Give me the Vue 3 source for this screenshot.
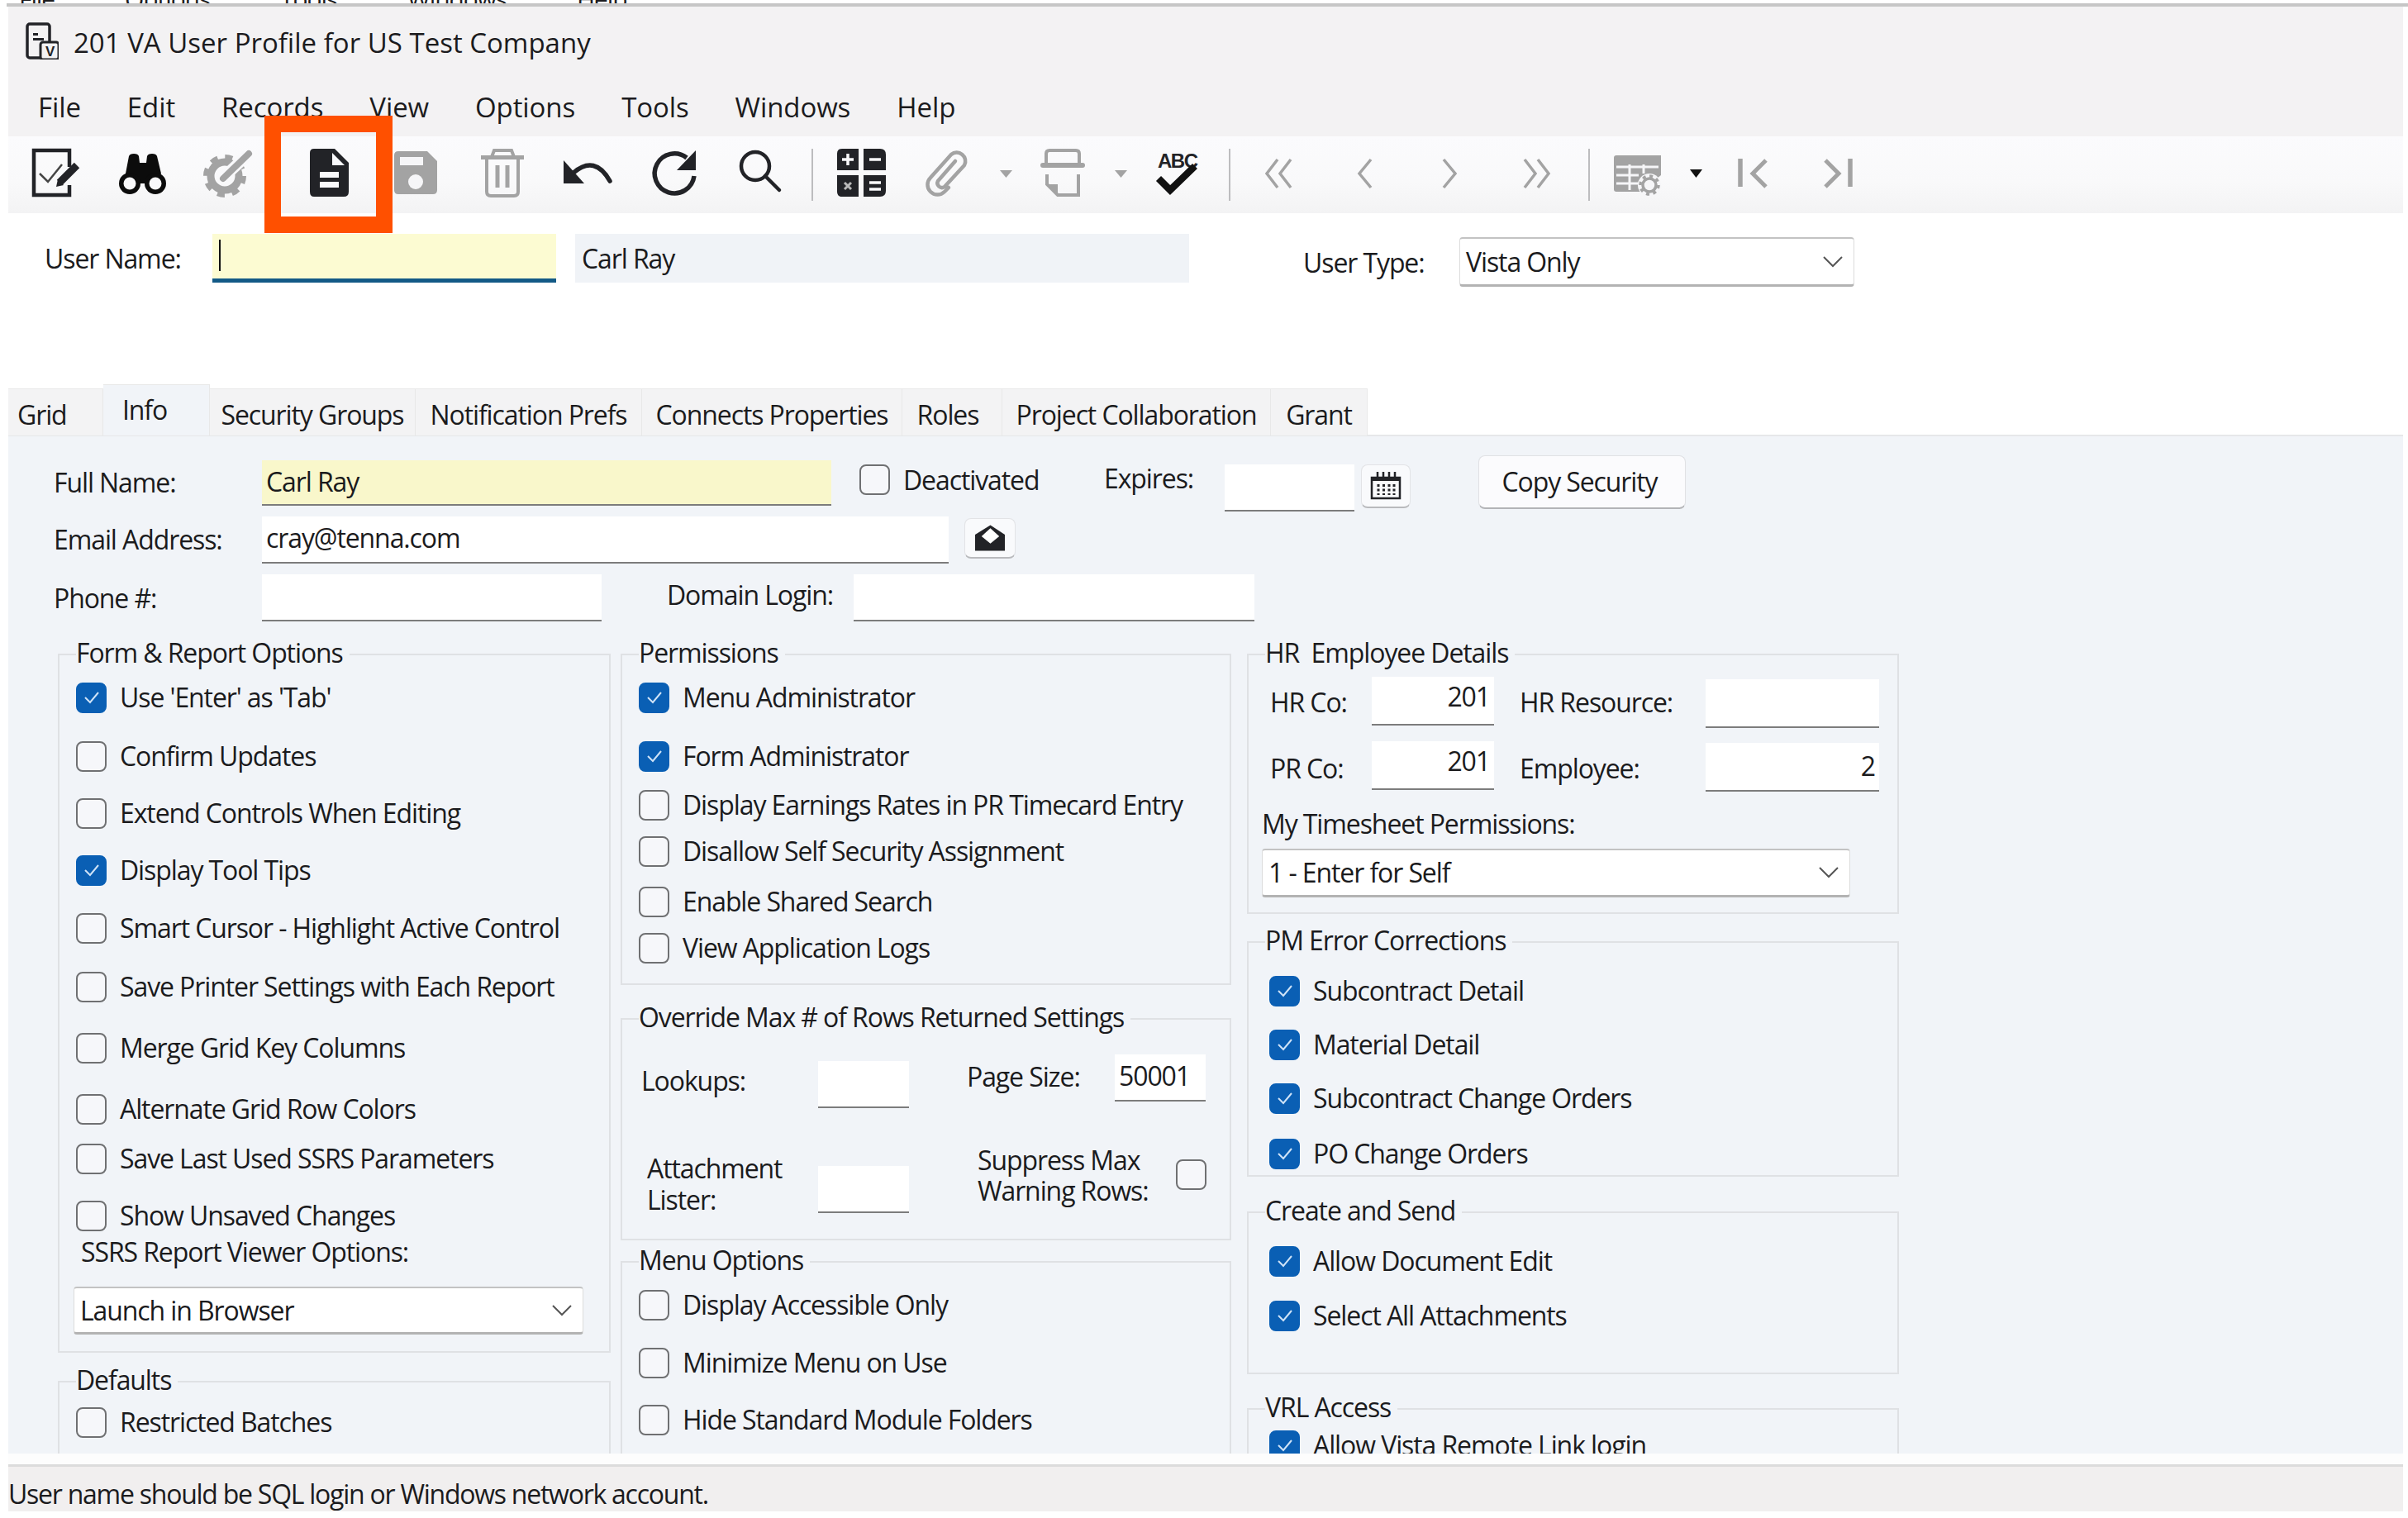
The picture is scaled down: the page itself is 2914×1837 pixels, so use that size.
<script setup>
const tabs = ['Grid', 'Info', 'Security Groups', 'Notification Prefs', 'Connects Properties', 'Roles', 'Project Collaboration', 'Grant']
const menus = ['File', 'Edit', 'Records', 'View', 'Options', 'Tools', 'Windows', 'Help']
const behind = ['File', 'Options', 'Tools', 'Windows', 'Help']

const formOptions = [
  { text: "Use 'Enter' as 'Tab'", on: true, gap: 12 },
  { text: 'Confirm Updates', gap: 27 },
  { text: 'Extend Controls When Editing', gap: 25 },
  { text: 'Display Tool Tips', on: true, gap: 25 },
  { text: 'Smart Cursor - Highlight Active Control', gap: 26 },
  { text: 'Save Printer Settings with Each Report', gap: 27 },
  { text: 'Merge Grid Key Columns', gap: 30 },
  { text: 'Alternate Grid Row Colors', gap: 30 },
  { text: 'Save Last Used SSRS Parameters', gap: 16 },
  { text: 'Show Unsaved Changes', gap: 25 }
]
const permissions = [
  { text: 'Menu Administrator', on: true, gap: 12 },
  { text: 'Form Administrator', on: true, gap: 27 },
  { text: 'Display Earnings Rates in PR Timecard Entry', gap: 15 },
  { text: 'Disallow Self Security Assignment', gap: 12 },
  { text: 'Enable Shared Search', gap: 17 },
  { text: 'View Application Logs', gap: 12 }
]
const menuOptions = [
  { text: 'Display Accessible Only', gap: 12 },
  { text: 'Minimize Menu on Use', gap: 26 },
  { text: 'Hide Standard Module Folders', gap: 25 }
]
const pmErrors = [
  { text: 'Subcontract Detail', on: true, gap: 19 },
  { text: 'Material Detail', on: true, gap: 21 },
  { text: 'Subcontract Change Orders', on: true, gap: 21 },
  { text: 'PO Change Orders', on: true, gap: 23 }
]
const createSend = [
  { text: 'Allow Document Edit', on: true, gap: 19 },
  { text: 'Select All Attachments', on: true, gap: 22 }
]
</script>

<template>
  <div class="app">
    <div class="behind">
      <span v-for="m in behind" :key="m">{{ m }}</span>
    </div>
    <div class="topline"></div>

    <div class="titlebar">
      <svg class="title-icon" viewBox="0 0 40 45">
        <rect x="2" y="2" width="27" height="41" rx="3" fill="none" stroke="#222327" stroke-width="3.5" />
        <rect x="9" y="13" width="6" height="3" fill="#222327" />
        <rect x="9" y="19" width="13" height="3" fill="#222327" />
        <rect x="18" y="24" width="22" height="21" rx="3" fill="#f3f2f3" stroke="#222327" stroke-width="3" />
        <text x="29" y="41" text-anchor="middle" class="title-v">V</text>
      </svg>
      <span class="title-text">201 VA User Profile for US Test Company</span>
    </div>

    <div class="menubar">
      <span v-for="m in menus" :key="m" class="menu-item">{{ m }}</span>
    </div>

    <div class="toolbar">
      <svg class="tb edit" viewBox="0 0 48 60">
        <path d="M46 22V2H3V56H46V44" fill="none" stroke="#222327" stroke-width="4.5" />
        <path d="M10 30L20 40L37 19" fill="none" stroke="#444" stroke-width="2.5" />
        <path d="M34 41L55 20" stroke="#222327" stroke-width="9" />
        <path d="M30 46L32 37L39 44Z" fill="#222327" />
      </svg>
      <svg class="tb find" viewBox="0 0 60 60">
        <path d="M9 30L13 9Q14 6 19 6Q24 6 25 9L26 17H34L35 9Q36 6 41 6Q46 6 47 9L52 30L44 42H16Z" fill="#0c0c0c" />
        <circle cx="14" cy="42" r="13" fill="#0c0c0c" />
        <circle cx="45" cy="42" r="13" fill="#0c0c0c" />
        <circle cx="14" cy="42" r="7.5" fill="#f9f9fb" />
        <circle cx="45" cy="42" r="7.5" fill="#f9f9fb" />
      </svg>
      <svg class="tb gear" viewBox="0 0 58 60">
        <circle cx="24" cy="33" r="17" fill="none" stroke="#a3a3a3" stroke-width="9" />
        <circle cx="24" cy="33" r="23" fill="none" stroke="#a3a3a3" stroke-width="6" stroke-dasharray="9 9" />
        <path d="M20 37L52 7" stroke="#f9f9fb" stroke-width="14" />
        <path d="M22 36L53 6" stroke="#a3a3a3" stroke-width="8" stroke-linecap="round" />
      </svg>
      <svg class="tb newdoc" viewBox="0 0 48 60">
        <path d="M5 0H30L47 17V52Q47 58 41 58H5Q0 58 0 52V5Q0 0 5 0Z" fill="#222327" />
        <path d="M27 5L42 20H27Z" fill="#f9f9fb" />
        <rect x="12" y="28" width="23" height="7" fill="#f9f9fb" />
        <rect x="12" y="40" width="23" height="7" fill="#f9f9fb" />
      </svg>
      <svg class="tb save" viewBox="0 0 52 60">
        <path d="M5 3H40L52 15V50Q52 55 47 55H5Q0 55 0 50V8Q0 3 5 3Z" fill="#a3a3a3" />
        <rect x="7" y="10" width="28" height="10" fill="#f6f6f8" />
        <circle cx="26" cy="40" r="9" fill="#f6f6f8" />
      </svg>
      <svg class="tb trash" viewBox="0 0 52 60" fill="none" stroke="#a3a3a3">
        <path d="M13 10L16 2H37L40 10" stroke-width="4" />
        <path d="M0 10.500H52" stroke-width="5" />
        <path d="M7 11V52Q7 57 12 57H40Q45 57 45 52V11" stroke-width="4" />
        <path d="M20 20V47M32 20V47" stroke-width="5" />
      </svg>
      <svg class="tb undo" viewBox="0 0 58 60">
        <path d="M0 14L25 42H0Z" fill="#222327" />
        <path d="M12 29Q38 7 56 39" fill="none" stroke="#222327" stroke-width="5.500" stroke-linecap="round" />
      </svg>
      <svg class="tb redo" viewBox="0 0 52 60">
        <path d="M41 11A24 24 0 1 0 50 33" fill="none" stroke="#222327" stroke-width="5.500" />
        <path d="M52 2V26H29Z" fill="#222327" />
      </svg>
      <svg class="tb search" viewBox="0 0 50 60" fill="none" stroke="#222327">
        <circle cx="19" cy="21" r="17" stroke-width="4.500" />
        <path d="M31 33L48 50" stroke-width="4.500" stroke-linecap="round" />
      </svg>
      <span class="tb-sep sep-1"></span>
      <svg class="tb calc" viewBox="0 0 60 60">
        <path d="M6 0H26V26H0V6Q0 0 6 0ZM32 0H52Q59 0 59 7V26H32ZM0 32H26V58H6Q0 58 0 52ZM32 32H59V51Q59 58 52 58H32Z" fill="#222327" />
        <path d="M13 6V20M6 13H20M39 13H53M39 41H53M39 49H53" stroke="#f9f9fb" stroke-width="3.500" />
        <path d="M9 41L17 49M17 41L9 49" stroke="#b9b9b9" stroke-width="3" />
      </svg>
      <svg class="tb clip" viewBox="0 0 54 60">
        <path d="M36 15L15 39A5.500 5.500 0 0 0 23 46L47 20A10.500 10.500 0 0 0 31 7L6 35A12 12 0 0 0 23 52L28 47" fill="none" stroke="#a3a3a3" stroke-width="4.500" stroke-linecap="round" />
      </svg>
      <svg class="tb small arr-1" viewBox="0 0 16 60"><path d="M0 26H15L7.500 35Z" fill="#a3a3a3" /></svg>
      <svg class="tb print" viewBox="0 0 52 60" fill="none" stroke="#a3a3a3">
        <path d="M6 19V6Q6 2 10 2H42Q46 2 46 6V19" stroke-width="4" />
        <path d="M2 20H50" stroke-width="6" stroke-linecap="round" />
        <path d="M7 31V43L20 56H45V31" stroke-width="4" />
        <path d="M7 43H20V56Z" fill="#a3a3a3" stroke="none" />
      </svg>
      <svg class="tb small arr-2" viewBox="0 0 16 60"><path d="M0 26H15L7.500 35Z" fill="#a3a3a3" /></svg>
      <svg class="tb spell" viewBox="0 0 52 60">
        <text x="3" y="23" class="abc">ABC</text>
        <path d="M4 36L18 50L48 21" fill="none" stroke="#111" stroke-width="8.500" />
      </svg>
      <span class="tb-sep sep-2"></span>
      <svg class="tb first" viewBox="0 0 38 60" fill="none" stroke="#a3a3a3" stroke-width="3.500">
        <path d="M17 13L4 30L17 47M33 13L20 30L33 47" />
      </svg>
      <svg class="tb prev" viewBox="0 0 22 60" fill="none" stroke="#a3a3a3" stroke-width="3.500">
        <path d="M19 13L5 30L19 47" />
      </svg>
      <svg class="tb next" viewBox="0 0 22 60" fill="none" stroke="#a3a3a3" stroke-width="3.500">
        <path d="M3 13L17 30L3 47" />
      </svg>
      <svg class="tb last" viewBox="0 0 38 60" fill="none" stroke="#a3a3a3" stroke-width="3.500">
        <path d="M5 13L18 30L5 47M21 13L34 30L21 47" />
      </svg>
      <span class="tb-sep sep-3"></span>
      <svg class="tb grid-ic" viewBox="0 0 58 60">
        <path d="M3 8H57V32L32 52H3Q0 52 0 49V11Q0 8 3 8Z" fill="#a3a3a3" />
        <path d="M3 22H54M3 32H30M3 42H30M19 19V50M36 19V30" stroke="#f6f6f8" stroke-width="3" />
        <circle cx="43" cy="44" r="14" fill="#f6f6f8" />
        <circle cx="43" cy="44" r="8" fill="none" stroke="#a3a3a3" stroke-width="3.500" />
        <circle cx="43" cy="44" r="11" fill="none" stroke="#a3a3a3" stroke-width="3.500" stroke-dasharray="4 4.600" />
      </svg>
      <svg class="tb small arr-3" viewBox="0 0 16 60"><path d="M0 25H15L7.500 35Z" fill="#111" /></svg>
      <svg class="tb goto-first" viewBox="0 0 36 60" fill="none" stroke="#a3a3a3" stroke-width="5">
        <path d="M3 12V46" stroke-width="5.500" />
        <path d="M34 14L18 30L34 46" />
      </svg>
      <svg class="tb goto-last" viewBox="0 0 36 60" fill="none" stroke="#a3a3a3" stroke-width="5">
        <path d="M32 12V46" stroke-width="5.500" />
        <path d="M2 14L18 30L2 46" />
      </svg>
    </div>

    <div class="main">
      <div class="user-row">
        <span class="user-label">User Name:</span>
        <div class="user-input"><span class="caret"></span></div>
        <div class="user-display">Carl Ray</div>
        <span class="type-label">User Type:</span>
        <div class="dropdown type-select">
          <span>Vista Only</span>
          <svg class="chev" viewBox="0 0 24 14"><path d="M1 1L12 12L23 1" fill="none" stroke="#555" stroke-width="2" /></svg>
        </div>
      </div>

      <div class="tabs">
        <div
          v-for="t in tabs"
          :key="t"
          class="tab"
          :class="{ active: t === 'Info', 'tab-first': t === 'Grid' }"
        >{{ t }}</div>
      </div>

      <div class="panel">
        <div class="row row-name">
          <span class="lbl lbl-main lbl-name">Full Name:</span>
          <div class="field required w-fullname">Carl Ray</div>
          <span class="checkbox deact"></span>
          <span class="deact-text">Deactivated</span>
          <span class="expires-label">Expires:</span>
          <div class="field w-expires"></div>
          <button class="mini-btn cal-btn">
            <svg viewBox="0 0 38 34" class="cal-ic">
              <path d="M2 7H36V32H2Z" fill="none" stroke="#222327" stroke-width="2.500" />
              <path d="M2 6H36V11H2Z" fill="#222327" />
              <path d="M9 0V7M16 0V7M23 0V7M30 0V7" stroke="#222327" stroke-width="2.500" />
              <path d="M10 15V28M16.500 15V28M23 15V28M29 15V28" stroke="#222327" stroke-width="3" stroke-dasharray="3 2.500" />
            </svg>
          </button>
          <button class="copy-btn">Copy Security</button>
        </div>

        <div class="row row-email">
          <span class="lbl lbl-main lbl-email">Email Address:</span>
          <div class="field w-email">cray@tenna.com</div>
          <button class="mini-btn mail-btn">
            <svg viewBox="0 0 38 32" class="mail-ic">
              <path d="M19 0L37 12V32H0V12Z" fill="#222327" />
              <path d="M19 4L30 14L19 23L8 14Z" fill="#fff" />
            </svg>
          </button>
        </div>

        <div class="row row-phone">
          <span class="lbl lbl-main lbl-phone">Phone #:</span>
          <div class="field w-phone"></div>
          <span class="lbl domain-label">Domain Login:</span>
          <div class="field w-domain"></div>
        </div>

        <div class="columns">
          <div class="col col-1">
            <fieldset class="group form-group">
              <legend>Form &amp; Report Options</legend>
              <label v-for="o in formOptions" :key="o.text" class="opt" :style="{ marginTop: o.gap + 'px' }">
                <span class="checkbox" :class="{ checked: o.on }">
                  <svg v-if="o.on" viewBox="0 0 20 16"><path d="M2 8L8 14L18 2" fill="none" stroke="#cfe3f7" stroke-width="2" /></svg>
                </span>
                {{ o.text }}
              </label>
              <div class="ssrs-label">SSRS Report Viewer Options:</div>
              <div class="dropdown ssrs-select">
                <span>Launch in Browser</span>
                <svg class="chev" viewBox="0 0 24 14"><path d="M1 1L12 12L23 1" fill="none" stroke="#555" stroke-width="2" /></svg>
              </div>
            </fieldset>
            <fieldset class="group defaults-group">
              <legend>Defaults</legend>
              <label class="opt restricted"><span class="checkbox"></span>Restricted Batches</label>
            </fieldset>
          </div>

          <div class="col col-2">
            <fieldset class="group perm-group">
              <legend>Permissions</legend>
              <label v-for="o in permissions" :key="o.text" class="opt" :style="{ marginTop: o.gap + 'px' }">
                <span class="checkbox" :class="{ checked: o.on }">
                  <svg v-if="o.on" viewBox="0 0 20 16"><path d="M2 8L8 14L18 2" fill="none" stroke="#cfe3f7" stroke-width="2" /></svg>
                </span>
                {{ o.text }}
              </label>
            </fieldset>
            <fieldset class="group override-group">
              <legend>Override Max # of Rows Returned Settings</legend>
              <div class="ovr-row ovr-1">
                <span class="ovr-lookups">Lookups:</span>
                <div class="field ovr-field ovr-lookups-input"></div>
                <span class="ovr-page">Page Size:</span>
                <div class="field ovr-field ovr-page-input">50001</div>
              </div>
              <div class="ovr-row ovr-2">
                <span class="ovr-attach">Attachment<br />Lister:</span>
                <div class="field ovr-field ovr-attach-input"></div>
                <span class="ovr-suppress">Suppress Max<br />Warning Rows:</span>
                <span class="checkbox ovr-check"></span>
              </div>
            </fieldset>
            <fieldset class="group menu-group">
              <legend>Menu Options</legend>
              <label v-for="o in menuOptions" :key="o.text" class="opt" :style="{ marginTop: o.gap + 'px' }">
                <span class="checkbox"></span>
                {{ o.text }}
              </label>
            </fieldset>
          </div>

          <div class="col col-3">
            <fieldset class="group hr-group">
              <legend>HR&nbsp; Employee Details</legend>
              <div class="hr-row hr-1">
                <span class="hr-label hr-l1">HR Co:</span>
                <div class="field hr-num hr-co">201</div>
                <span class="hr-label hr-l2">HR Resource:</span>
                <div class="field hr-num hr-res"></div>
              </div>
              <div class="hr-row hr-2">
                <span class="hr-label hr-l3">PR Co:</span>
                <div class="field hr-num hr-co">201</div>
                <span class="hr-label hr-l4">Employee:</span>
                <div class="field hr-num hr-res hr-emp">2</div>
              </div>
              <div class="ts-label">My Timesheet Permissions:</div>
              <div class="dropdown ts-select">
                <span>1 - Enter for Self</span>
                <svg class="chev" viewBox="0 0 24 14"><path d="M1 1L12 12L23 1" fill="none" stroke="#555" stroke-width="2" /></svg>
              </div>
            </fieldset>
            <fieldset class="group pm-group">
              <legend>PM Error Corrections</legend>
              <label v-for="o in pmErrors" :key="o.text" class="opt" :style="{ marginTop: o.gap + 'px' }">
                <span class="checkbox checked">
                  <svg viewBox="0 0 20 16"><path d="M2 8L8 14L18 2" fill="none" stroke="#cfe3f7" stroke-width="2" /></svg>
                </span>
                {{ o.text }}
              </label>
            </fieldset>
            <fieldset class="group create-group">
              <legend>Create and Send</legend>
              <label v-for="o in createSend" :key="o.text" class="opt" :style="{ marginTop: o.gap + 'px' }">
                <span class="checkbox checked">
                  <svg viewBox="0 0 20 16"><path d="M2 8L8 14L18 2" fill="none" stroke="#cfe3f7" stroke-width="2" /></svg>
                </span>
                {{ o.text }}
              </label>
            </fieldset>
            <fieldset class="group vrl-group">
              <legend>VRL Access</legend>
              <label class="opt vrl-opt">
                <span class="checkbox checked">
                  <svg viewBox="0 0 20 16"><path d="M2 8L8 14L18 2" fill="none" stroke="#cfe3f7" stroke-width="2" /></svg>
                </span>
                Allow Vista Remote Link login
              </label>
            </fieldset>
          </div>
        </div>
      </div>

      <div class="panel-end"></div>
      <div class="statusbar">User name should be SQL login or Windows network account.</div>
    </div>

    <div class="highlight"></div>
  </div>
</template>

<style scoped>
.app {
  position: relative;
  width: 2914px;
  height: 1837px;
  overflow: hidden;
  background: #fff;
  color: #1b1b1d;
  font-family: "Open Sans", "Noto Sans", sans-serif;
  font-size: 32px;
  letter-spacing: -1.1px;
  line-height: 44px;
}

/* bottom edge of the window behind */
.behind {
  height: 4px;
  overflow: hidden;
  display: flex;
  padding-left: 23px;
  gap: 85px;
  font-size: 30px;
  line-height: 10px;
}
.behind span {
  margin-top: -6px;
}
.topline {
  height: 4px;
  margin-left: 8px;
  background: #c6c6c6;
}
.titlebar {
  height: 75px;
  margin-left: 10px;
  margin-right: 6px;
  padding-left: 21px;
  background: #f3f2f3;
  display: flex;
  align-items: flex-start;
}
.title-icon {
  width: 40px;
  height: 45px;
  margin-top: 19px;
}
.title-v {
  font: bold 17px "Liberation Sans", sans-serif;
  fill: #222327;
}
.title-text {
  margin-left: 18px;
  margin-top: 22px;
  font-size: 33px;
  letter-spacing: 0;
}
.menubar {
  height: 82px;
  margin-left: 10px;
  margin-right: 6px;
  padding-left: 8px;
  background: #f3f2f3;
  display: flex;
  align-items: flex-start;
  padding-top: 25px;
  box-sizing: border-box;
  font-size: 33px;
  letter-spacing: -0.1px;
}
.menu-item {
  padding: 0 28px;
}

.toolbar {
  height: 93px;
  margin-left: 10px;
  margin-right: 6px;
  padding-top: 15px;
  box-sizing: border-box;
  background: linear-gradient(#fbfbfd, #f9f9fa 60%, #f3f3f4);
  display: flex;
  align-items: flex-start;
}
.tb {
  height: 60px;
  flex: none;
  overflow: visible;
}
.tb.small { width: 16px; }
.edit { width: 48px; margin-left: 28px; }
.find { width: 60px; margin-left: 57px; }
.gear { width: 58px; margin-left: 45px; }
.newdoc { width: 48px; margin-left: 69px; }
.save { width: 52px; margin-left: 54px; }
.trash { width: 52px; margin-left: 53px; }
.undo { width: 58px; margin-left: 48px; }
.redo { width: 52px; margin-left: 50px; }
.search { width: 50px; margin-left: 53px; }
.calc { width: 60px; margin-left: 29px; }
.clip { width: 54px; margin-left: 47px; }
.arr-1 { margin-left: 36px; }
.print { width: 52px; margin-left: 34px; }
.arr-2 { margin-left: 37px; }
.spell { width: 52px; margin-left: 33px; }
.first { width: 38px; margin-left: 40px; }
.prev { width: 22px; margin-left: 73px; }
.next { width: 22px; margin-left: 82px; }
.last { width: 38px; margin-left: 74px; }
.grid-ic { width: 58px; margin-left: 29px; }
.arr-3 { margin-left: 34px; }
.goto-first { width: 36px; margin-left: 42px; }
.goto-last { width: 36px; margin-left: 68px; }
.abc {
  font: bold 24px "Liberation Sans", sans-serif;
  letter-spacing: -1.5px;
  fill: #222327;
}
.tb-sep {
  flex: none;
  width: 2px;
  height: 63px;
  background: #bdbdbf;
}
.sep-1 { margin-left: 37px; }
.sep-2 { margin-left: 37px; }
.sep-3 { margin-left: 44px; }

.main {
  margin-left: 10px;
  margin-right: 6px;
}
.user-row {
  height: 207px;
  padding-top: 25px;
  box-sizing: border-box;
  display: flex;
  align-items: flex-start;
}
.user-label {
  margin-left: 44px;
  width: 203px;
  margin-top: 8px;
  flex: none;
}
.user-input {
  width: 416px;
  height: 59px;
  box-sizing: border-box;
  flex: none;
  background: #fcfbd2;
  border-bottom: 5px solid #135a86;
  padding-top: 7px;
  padding-left: 8px;
}
.caret {
  display: block;
  width: 2px;
  height: 38px;
  background: #111;
}
.user-display {
  margin-left: 23px;
  width: 743px;
  height: 59px;
  box-sizing: border-box;
  flex: none;
  background: #f0f3f7;
  padding: 8px 0 0 8px;
}
.type-label {
  margin-left: 138px;
  width: 189px;
  margin-top: 13px;
  flex: none;
}
.dropdown {
  box-sizing: border-box;
  background: #fff;
  border: 1px solid #dcdcdc;
  border-top: 2px solid #c3c3c3;
  border-bottom: 3px solid #b3b3b3;
  border-radius: 4px;
  display: flex;
  justify-content: space-between;
  align-items: center;
  flex: none;
  padding: 0 13px 0 7px;
}
.chev {
  width: 24px;
  height: 14px;
}
.type-select {
  width: 478px;
  height: 60px;
  margin-top: 4px;
}

.tabs {
  display: grid;
  grid-template-columns: 115px 129px 249px 274px 315px 121px 325px 117px;
  align-items: end;
  height: 62px;
  border-bottom: 0;
}
.tab {
  height: 57px;
  box-sizing: border-box;
  background: #f3f3f4;
  border: 1px solid #e8e8e8;
  border-bottom: 0;
  border-left: 0;
  text-align: center;
  line-height: 62px;
  white-space: nowrap;
}
.tab:nth-child(6) {
  padding-right: 10px;
}
.tab-first {
  text-align: left;
  padding-left: 11px;
}
.tab.active {
  height: 62px;
  background: #f1f4f8;
  padding-right: 28px;
  line-height: 60px;
}

.panel {
  height: 1233px;
  box-sizing: border-box;
  overflow: hidden;
  background: #f1f4f8;
  border-top: 2px solid #e6e7e9;
  padding: 23px 0 0 56px;
  margin-top: -1px;
}
.row {
  display: flex;
  align-items: flex-start;
}
.field {
  flex: none;
  box-sizing: border-box;
  background: #fff;
  border-bottom: 2px solid #7c7c7c;
  padding: 0 5px;
  line-height: 52px;
  white-space: nowrap;
}
.lbl {
  flex: none;
}
.lbl-main {
  width: 251px;
  margin-left: -1px;
  margin-right: 1px;
}
.row-name { height: 68px; }
.lbl-name { margin-top: 11px; }
.w-fullname {
  width: 689px;
  height: 55px;
  margin-top: 6px;
  background: #f9f7cb;
}
.checkbox {
  flex: none;
  box-sizing: border-box;
  width: 37px;
  height: 37px;
  border: 2.5px solid #6f7072;
  border-radius: 8px;
  background: #f6f7fa;
  display: inline-flex;
  align-items: center;
  justify-content: center;
}
.checkbox.checked {
  background: #0a5fb4;
  border-color: #0a5fb4;
}
.checkbox svg {
  width: 20px;
  height: 16px;
}
.deact {
  margin-left: 34px;
  margin-top: 11px;
}
.deact-text {
  margin-left: 16px;
  margin-top: 8px;
  width: 243px;
  flex: none;
}
.expires-label {
  width: 146px;
  margin-top: 6px;
  flex: none;
}
.w-expires {
  width: 157px;
  height: 57px;
  margin-top: 11px;
}
.mini-btn {
  flex: none;
  padding: 0;
  background: #f9fafc;
  border: 1px solid #e2e3e6;
  border-bottom: 2px solid #b9babd;
  border-radius: 8px;
  display: flex;
  align-items: center;
  justify-content: center;
}
.cal-btn {
  width: 60px;
  height: 53px;
  margin-left: 8px;
  margin-top: 11px;
}
.cal-ic {
  width: 38px;
  height: 34px;
}
.copy-btn {
  flex: none;
  width: 251px;
  height: 65px;
  margin-left: 82px;
  padding: 0 6px 0 0;
  background: #fbfbfd;
  border: 1px solid #e0e1e4;
  border-bottom: 2px solid #b3b4b7;
  border-radius: 8px;
  font: inherit;
  letter-spacing: inherit;
  color: inherit;
}

.row-email {
  margin-top: 6px;
  height: 57px;
}
.lbl-email { margin-top: 6px; }
.w-email {
  width: 831px;
  height: 57px;
}
.mail-btn {
  width: 62px;
  height: 49px;
  margin-left: 19px;
  margin-top: 2px;
}
.mail-ic {
  width: 37px;
  height: 32px;
}
.row-phone {
  margin-top: 13px;
  height: 57px;
}
.lbl-phone { margin-top: 7px; }
.w-phone {
  width: 411px;
  height: 57px;
}
.domain-label {
  margin-left: 79px;
  width: 226px;
  margin-top: 3px;
}
.w-domain {
  width: 485px;
  height: 57px;
}

.columns {
  display: flex;
  align-items: flex-start;
  margin-top: 22px;
  margin-left: 4px;
}
.col {
  flex: none;
  display: flex;
  flex-direction: column;
}
.col-1 { width: 669px; }
.col-2 { width: 739px; margin-left: 12px; }
.col-3 { width: 789px; margin-left: 19px; }

.group {
  margin: 0;
  min-width: 0;
  border: 2px solid #dfe1e4;
  padding: 0 0 0 20px;
  display: flex;
  flex-direction: column;
  align-items: flex-start;
}
.group legend {
  padding: 0 8px 4px 0;
  margin-left: 0;
  line-height: 32px;
}
.opt {
  display: flex;
  align-items: center;
  gap: 16px;
  height: 44px;
  white-space: nowrap;
}
.form-group { padding-bottom: 20px; }
.ssrs-label {
  margin-left: 6px;
}
.ssrs-select {
  width: 617px;
  height: 58px;
  margin-top: 20px;
  margin-left: -3px;
  padding-left: 7px;
}
.defaults-group {
  margin-top: 17px;
  height: 200px;
}
.restricted { margin-top: 9px; }

.perm-group { padding-bottom: 21px; }
.override-group {
  margin-top: 23px;
  padding-bottom: 28px;
}
.ovr-row {
  display: flex;
  align-items: flex-start;
}
.ovr-1 { margin-top: 25px; }
.ovr-2 { margin-top: 44px; }
.ovr-field {
  width: 110px;
  height: 57px;
}
.ovr-lookups { width: 214px; margin-left: 3px; margin-top: 10px; flex: none; }
.ovr-lookups-input { margin-top: 8px; }
.ovr-page { width: 179px; margin-left: 70px; margin-top: 5px; flex: none; }
.ovr-attach {
  width: 207px;
  margin-left: 10px;
  margin-top: 10px;
  line-height: 38px;
  flex: none;
}
.ovr-attach-input { margin-top: 26px; }
.ovr-suppress {
  width: 240px;
  margin-left: 83px;
  line-height: 37px;
  flex: none;
}
.ovr-check { margin-top: 18px; }
.menu-group {
  margin-top: 8px;
  height: 260px;
}

.hr-group {
  padding-left: 16px;
  padding-bottom: 18px;
}
.hr-group legend { margin-left: 4px; }
.hr-row {
  display: flex;
  align-items: flex-start;
}
.hr-1 { margin-top: 9px; height: 61px; }
.hr-2 { margin-top: 17px; height: 60px; }
.hr-label { flex: none; margin-left: 10px; }
.hr-l1 { width: 123px; margin-top: 9px; }
.hr-l2 { width: 225px; margin-top: 9px; margin-left: 31px; }
.hr-l3 { width: 123px; margin-top: 11px; }
.hr-l4 { width: 225px; margin-top: 11px; margin-left: 31px; }
.hr-num {
  height: 59px;
  text-align: right;
  line-height: 48px;
}
.hr-co { width: 148px; }
.hr-res { width: 210px; margin-top: 3px; }
.hr-emp { margin-top: 2px; line-height: 56px; }
.ts-label { margin-top: 18px; }
.ts-select {
  width: 712px;
  height: 59px;
  margin-top: 8px;
}
.pm-group {
  margin-top: 16px;
  padding-left: 25px;
  padding-bottom: 4px;
}
.pm-group legend,
.create-group legend,
.vrl-group legend {
  margin-left: -5px;
}
.create-group {
  margin-top: 25px;
  padding-left: 25px;
  padding-bottom: 47px;
}
.vrl-group {
  margin-top: 24px;
  padding-left: 25px;
  height: 120px;
}
.vrl-opt { margin-top: 4px; }

.panel-end {
  height: 13px;
  background: #fdfdfd;
  border-bottom: 3px solid #dcdcdc;
  box-sizing: content-box;
}
.statusbar {
  height: 54px;
  box-sizing: border-box;
  background: #f1efef;
  padding-left: 0;
  line-height: 66px;
  letter-spacing: -1.25px;
}

.highlight {
  position: absolute;
  left: 320px;
  top: 140px;
  width: 155px;
  height: 142px;
  box-sizing: border-box;
  border: 20px solid #ff5000;
}
</style>

<style>
html, body {
  margin: 0;
  background: #fff;
}
</style>
